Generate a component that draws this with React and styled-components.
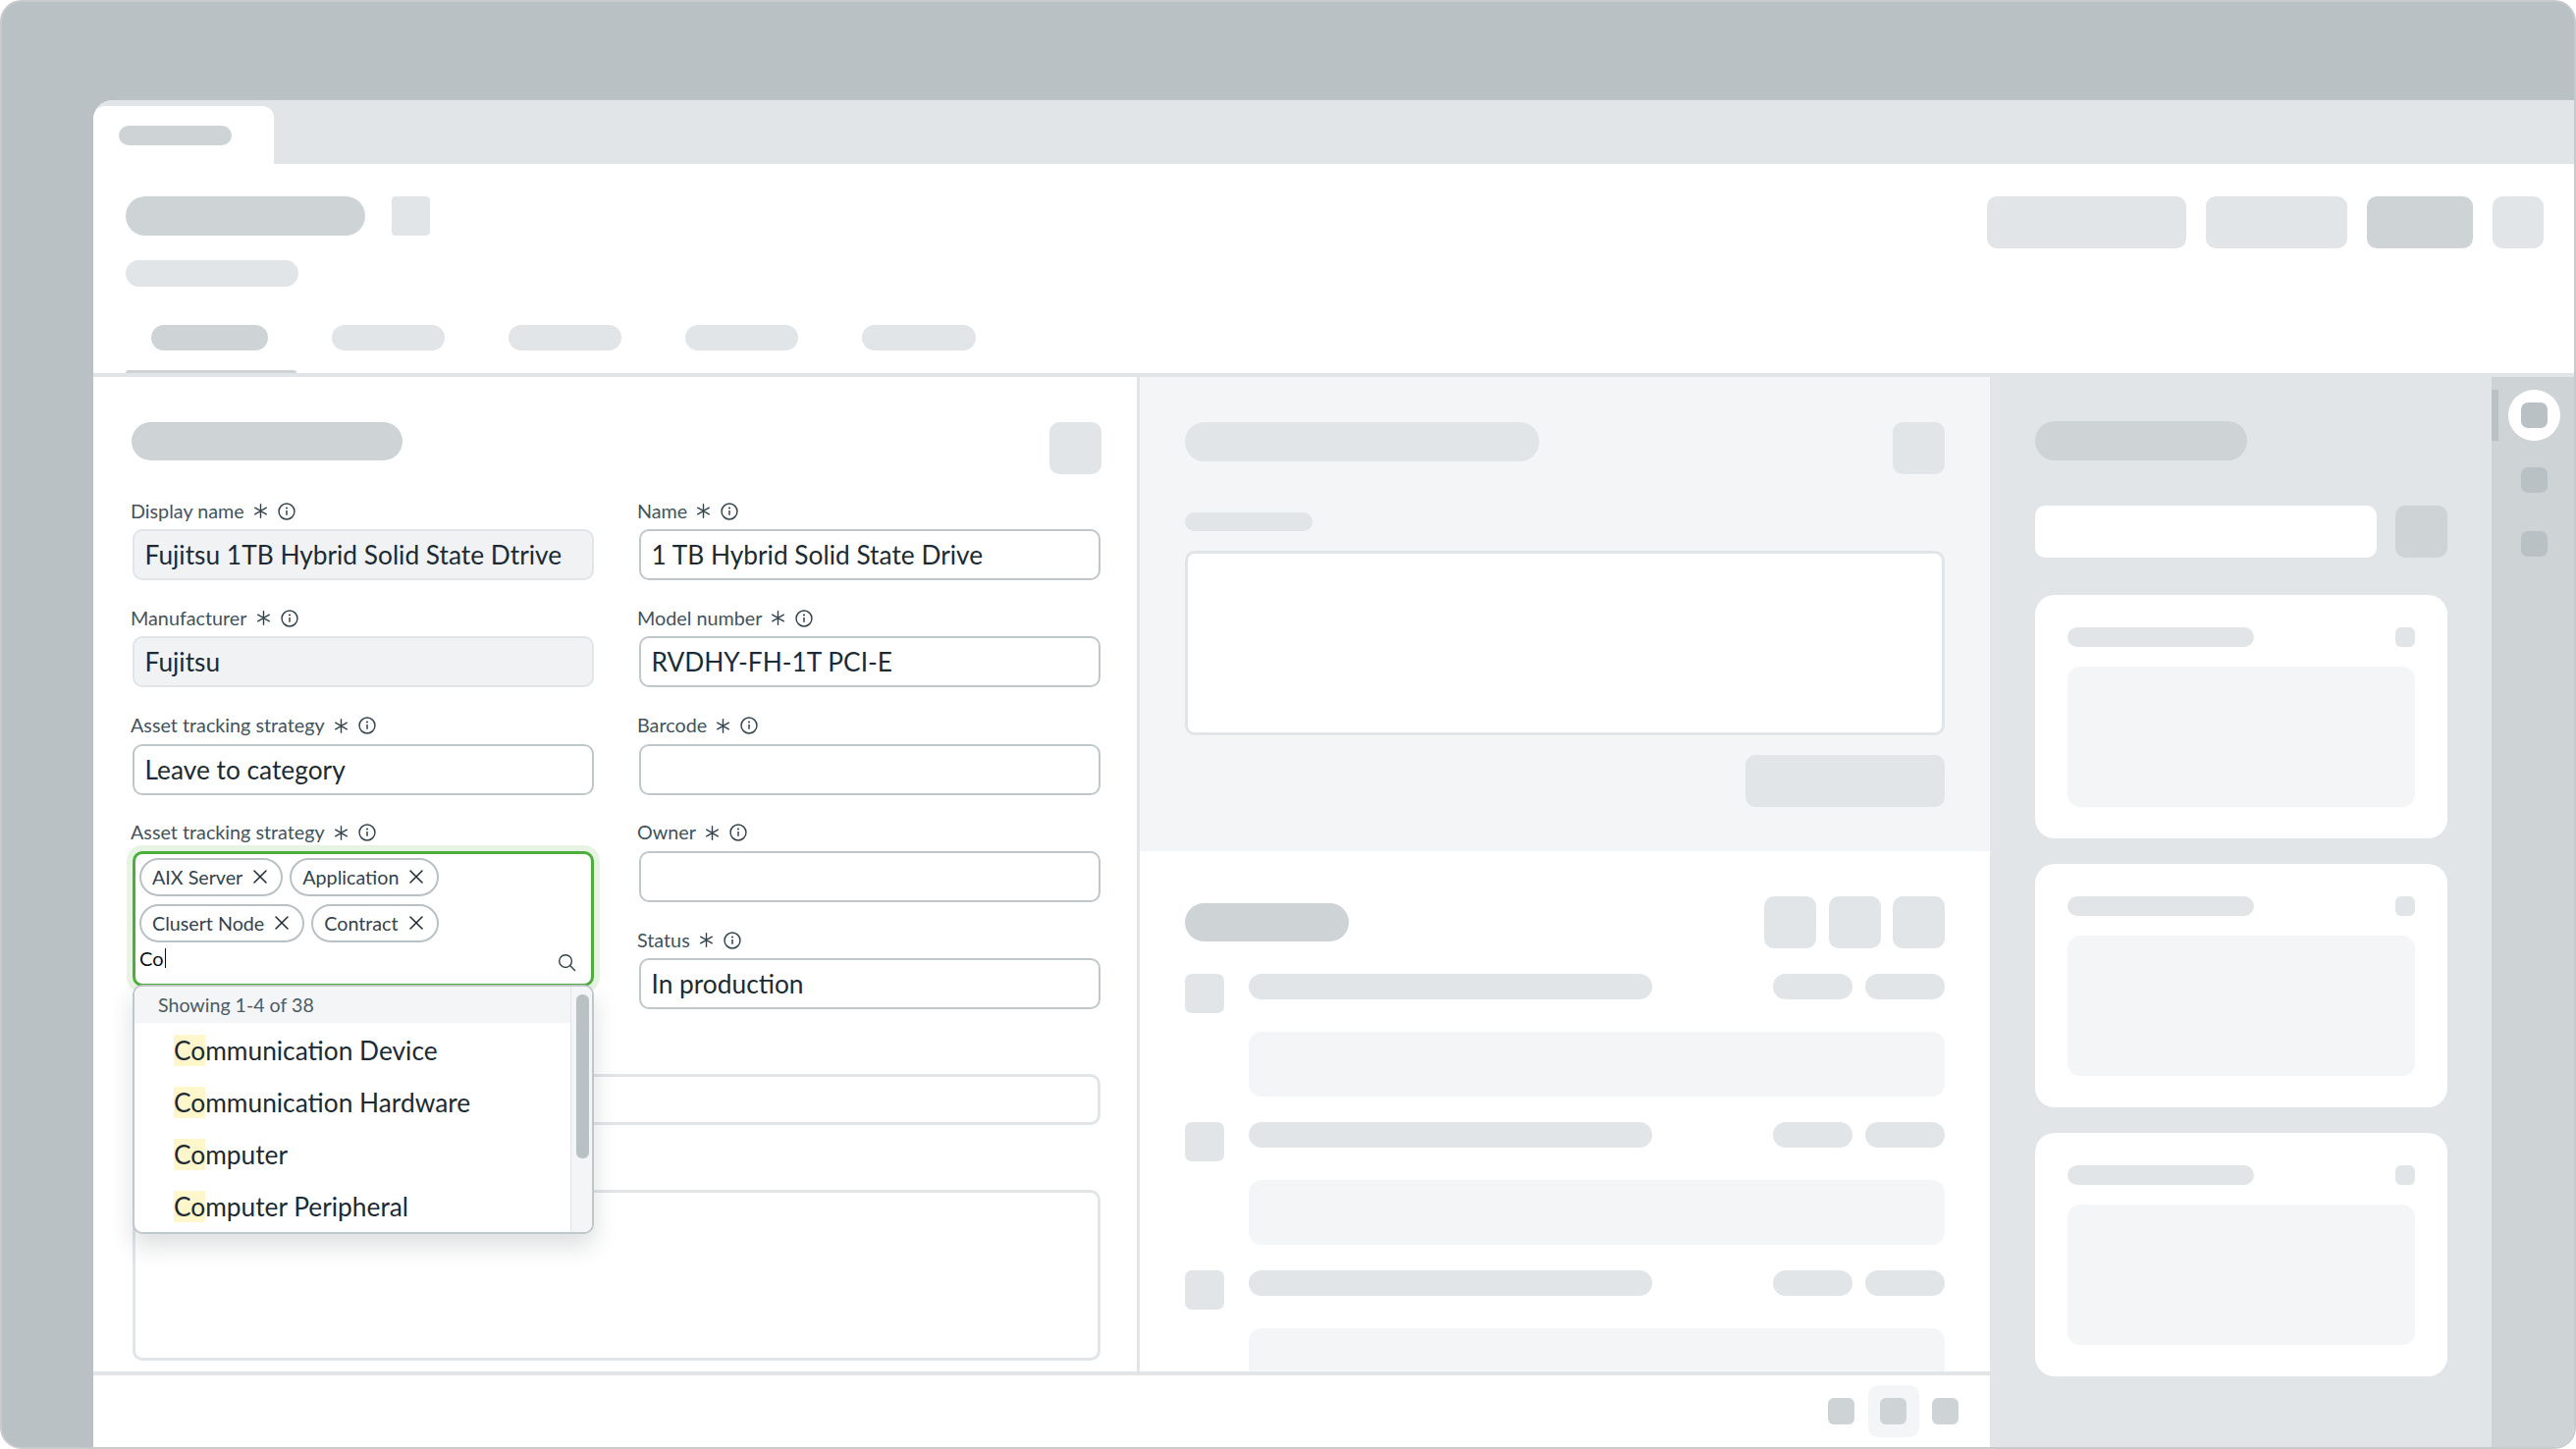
import styled, { createGlobalStyle } from "styled-components";

const DARK = "#b9c1c4";
const MID = "#ced3d6";
const LIGHT = "#e1e5e8";
const PALE = "#f4f5f7";
const INK = "#1c2b33";

const GlobalStyle = createGlobalStyle`
  html, body { margin: 0; padding: 0; background: #fff; }
  * { box-sizing: border-box; }
  body { font-family: "Lato", "Noto Sans", sans-serif; color: ${INK}; }
`;

const Frame = styled.div`
  width: 2624px;
  height: 1476px;
  display: flex;
  flex-direction: column;
  padding: 100px 0 0 93px;
  background: ${DARK};
  border: 2px solid #c8cacc;
  border-radius: 22px;
  overflow: hidden;
`;

const Win = styled.div`
  flex: 1;
  min-height: 0;
  display: flex;
  flex-direction: column;
  background: #fff;
  border-top-left-radius: 20px;
  overflow: hidden;
`;

const TabStrip = styled.div`
  height: 65px;
  flex-shrink: 0;
  display: flex;
  align-items: flex-end;
  background: ${LIGHT};
`;

const TabCard = styled.div`
  width: 184px;
  height: 59px;
  padding: 20px 0 0 26px;
  background: #fff;
  border-radius: 12px 12px 0 0;
`;

// grey placeholder shape, everything that is not real text in the mock
const Bone = styled.div`
  flex-shrink: 0;
  width: ${(p) => p.$w}px;
  height: ${(p) => p.$h}px;
  background: ${(p) => p.$tone || LIGHT};
  border-radius: ${(p) => (p.$r === undefined ? p.$h / 2 : p.$r)}px;
`;

const Header = styled.div`
  height: 217px;
  flex-shrink: 0;
  padding: 33px 31px 0 33px;
  border-bottom: 4px solid ${LIGHT};
`;

const HeaderTop = styled.div`
  display: flex;
  justify-content: space-between;
  align-items: flex-start;
`;

const TitleCol = styled.div`
  display: flex;
  flex-direction: column;
  gap: 25px;
`;

const TitleRow = styled.div`
  display: flex;
  gap: 27px;
`;

const Actions = styled.div`
  display: flex;
  gap: 20px;
`;

const Tabs = styled.div`
  display: flex;
  gap: 65px;
  margin-top: 39px;
  padding-left: 26px;
`;

const Tab = styled.div`
  position: relative;
  height: 49px;

  ${(p) =>
    p.$active &&
    `&::after {
      content: "";
      position: absolute;
      left: -26px;
      bottom: 0;
      width: 174px;
      height: 3px;
      background: ${MID};
      border-radius: 3px 3px 0 0;
    }`}
`;

const Body = styled.div`
  flex: 1;
  min-height: 0;
  display: flex;
`;

const Main = styled.div`
  width: 1932px;
  display: flex;
  flex-direction: column;
`;

const Columns = styled.div`
  flex: 1;
  min-height: 0;
  display: flex;
`;

const FormPanel = styled.div`
  width: 1066px;
  padding: 46px 37px 0 40px;
  border-right: 3px solid ${LIGHT};
`;

const PanelHead = styled.div`
  display: flex;
  justify-content: space-between;
  align-items: flex-start;
`;

const FormHead = styled(PanelHead)`
  margin: 0 -1px;
`;

const FormGrid = styled.div`
  display: grid;
  grid-template-columns: 470px 470px;
  column-gap: 46px;
  row-gap: 28.25px;
  margin-top: 27px;
`;

const Field = styled.div`
  min-width: 0;
  ${(p) => p.$span && `grid-row: span 2;`}
`;

const WideField = styled.div`
  grid-column: 1 / -1;
  padding-top: ${(p) => p.$top}px;
`;

const Label = styled.div`
  height: 29px;
  margin-left: -2px;
  padding-bottom: 8px;
  display: flex;
  align-items: center;
  font-size: 19.75px;
  line-height: 24px;
  color: #44535b;
`;

const Star = styled.svg`
  width: 15px;
  height: 15px;
  margin: 0 10px 0 9px;
  flex-shrink: 0;
`;

const InfoIcon = styled.svg`
  width: 18px;
  height: 18px;
  flex-shrink: 0;
`;

const Input = styled.div`
  height: ${(p) => p.$h || 52}px;
  padding: 0 10.5px;
  display: flex;
  align-items: center;
  font-size: 26.3px;
  color: ${INK};
  background: ${(p) => (p.$disabled ? "#f0f2f4" : "#fff")};
  border: ${(p) => (p.$soft ? 3 : 2)}px solid ${(p) => (p.$disabled || p.$soft ? LIGHT : "#c0c7ca")};
  border-radius: 10px;
`;

const Combo = styled.div`
  position: relative;
`;

const MultiBox = styled.div`
  height: 138px;
  padding: 4px 4px 0;
  background: #fff;
  border: 3px solid #4cae3b;
  border-radius: 10px;
  box-shadow: 0 0 0 6px #e7f3e3;
`;

const ChipList = styled.div`
  display: flex;
  flex-wrap: wrap;
  gap: 8px 7px;
`;

const Chip = styled.div`
  height: 39px;
  padding: 0 14px 0 11px;
  display: flex;
  align-items: center;
  gap: 11px;
  font-size: 19.7px;
  color: #33434b;
  border: 2px solid ${DARK};
  border-radius: 20px;
`;

const CloseIcon = styled.svg`
  width: 14px;
  height: 14px;
  flex-shrink: 0;
`;

const SearchRow = styled.div`
  display: flex;
  justify-content: space-between;
  align-items: flex-start;
  padding: 2px 11px 0 0;
`;

const Typed = styled.div`
  display: flex;
  align-items: center;
  font-size: 20px;
  line-height: 28px;
  color: #111;

  &::after {
    content: "";
    width: 1px;
    height: 20px;
    margin-left: 1px;
    background: #111;
  }
`;

const SearchIcon = styled.svg`
  width: 19px;
  height: 19px;
  margin-top: 9px;
`;

const Dropdown = styled.div`
  position: absolute;
  z-index: 5;
  top: calc(100% - 2px);
  left: 0;
  right: 0;
  height: 254px;
  display: flex;
  background: #fff;
  border: 2px solid #c0c7ca;
  border-radius: 10px;
  box-shadow: 0 12px 24px rgba(40, 50, 55, 0.16);
  overflow: hidden;
`;

const Options = styled.div`
  flex: 1;
  min-width: 0;
`;

const OptionHint = styled.div`
  height: 37px;
  padding-left: 24px;
  display: flex;
  align-items: center;
  font-size: 19.6px;
  color: #4d5b63;
  background: ${PALE};
`;

const Option = styled.div`
  height: 53px;
  padding: 12px 0 0 40px;
  font-size: 26.3px;
  line-height: 32px;
  color: ${INK};

  mark {
    background: #fff6cc;
    color: inherit;
  }
`;

const ScrollTrack = styled.div`
  width: 22px;
  padding: 8px 3px 0 5px;
  background: ${PALE};
  border-left: 1px solid ${LIGHT};
`;

const ScrollThumb = styled.div`
  height: 167px;
  background: ${DARK};
  border-radius: 6px;
`;

const NotesPanel = styled.div`
  width: 866px;
  display: flex;
  flex-direction: column;
`;

const NoteSection = styled.div`
  height: 483px;
  flex-shrink: 0;
  padding: 46px 46px 0;
  background: ${PALE};
`;

const NoteLabel = styled(Bone)`
  margin-top: 39px;
`;

const NoteBox = styled.div`
  height: 188px;
  margin: 20px 0;
  background: #fff;
  border: 3px solid ${LIGHT};
  border-radius: 10px;
`;

const Right = styled.div`
  display: flex;
  justify-content: flex-end;
`;

const ActivitySection = styled.div`
  flex: 1;
  min-height: 0;
  padding: 46px 46px 0;
  overflow: hidden;
`;

const ActivityHead = styled.div`
  display: flex;
  justify-content: space-between;
  align-items: center;
`;

const ButtonRow = styled.div`
  display: flex;
  gap: 12.5px;
`;

const Feed = styled.div`
  display: flex;
  flex-direction: column;
  gap: 26px;
  margin-top: 26px;
`;

const FeedItem = styled.div`
  display: grid;
  grid-template-columns: 40px 1fr;
  column-gap: 25px;
`;

const FeedTop = styled.div`
  display: flex;
  justify-content: space-between;
  margin-bottom: 33px;
`;

const FeedPills = styled.div`
  display: flex;
  gap: 13px;
`;

const FeedBlock = styled.div`
  height: 66px;
  background: ${PALE};
  border-radius: 13px;
`;

const Footer = styled.div`
  height: 77px;
  flex-shrink: 0;
  padding-right: 32px;
  display: flex;
  justify-content: flex-end;
  align-items: center;
  gap: 13.5px;
  border-top: 4px solid ${LIGHT};
`;

const PageButton = styled.div`
  width: 52px;
  height: 53px;
  display: flex;
  align-items: center;
  justify-content: center;
  background: ${PALE};
  border-radius: 10px;
`;

const SidePanel = styled.div`
  width: 511px;
  flex-shrink: 0;
  padding: 45px 45px 0 46px;
  background: ${LIGHT};
`;

const SideSearch = styled.div`
  display: flex;
  justify-content: space-between;
  margin: 46px 0 38px;
`;

const CardStack = styled.div`
  display: flex;
  flex-direction: column;
  gap: 26px;
`;

const Card = styled.div`
  height: 248px;
  padding: 33px;
  background: #fff;
  border-radius: 20px;
`;

const CardHead = styled.div`
  display: flex;
  justify-content: space-between;
  margin-bottom: 20px;
`;

const CardBlock = styled.div`
  height: 143px;
  background: ${PALE};
  border-radius: 13px;
`;

const Rail = styled.div`
  flex: 1;
  display: flex;
  flex-direction: column;
  gap: 13.5px;
  padding: 13px 0 0 17px;
  background: ${MID};
`;

const RailItem = styled.div`
  position: relative;
  width: 53px;
  height: 52px;
  display: flex;
  align-items: center;
  justify-content: center;
  border-radius: 50%;
  background: ${(p) => (p.$active ? "#fff" : "transparent")};

  ${(p) =>
    p.$active &&
    `&::before {
      content: "";
      position: absolute;
      left: -17px;
      top: 0;
      width: 7px;
      height: 52px;
      background: ${DARK};
    }`}
`;

const Required = () => (
  <Star viewBox="0 0 16 16" fill="none" stroke="#33434b" strokeWidth="1.5" strokeLinecap="round">
    <path d="M8 .8v14.4M1.8 4.4l12.4 7.2M14.2 4.4 1.8 11.6" />
  </Star>
);

const Info = () => (
  <InfoIcon viewBox="0 0 19 19" fill="none" stroke="#33434b">
    <circle cx="9.5" cy="9.5" r="8.4" strokeWidth="1.5" />
    <path d="M9.5 8.5v5" strokeWidth="1.6" />
    <circle cx="9.5" cy="5.8" r="1.1" fill="#33434b" stroke="none" />
  </InfoIcon>
);

const FieldLabel = ({ children }) => (
  <Label>
    {children}
    <Required />
    <Info />
  </Label>
);

const Tag = ({ children }) => (
  <Chip>
    {children}
    <CloseIcon viewBox="0 0 14 14" fill="none" stroke="#1c2b33" strokeWidth="1.5" strokeLinecap="round">
      <path d="M1 1l12 12M13 1 1 13" />
    </CloseIcon>
  </Chip>
);

const tags = ["AIX Server", "Application", "Clusert Node", "Contract"];
const options = ["mmunication Device", "mmunication Hardware", "mputer", "mputer Peripheral"];
const tabWidths = [119, 115, 115, 115, 116];

export default function App() {
  return (
    <>
      <GlobalStyle />
      <Frame>
        <Win>
          <TabStrip>
            <TabCard>
              <Bone $w={115} $h={20} $tone={MID} />
            </TabCard>
          </TabStrip>

          <Header>
            <HeaderTop>
              <TitleCol>
                <TitleRow>
                  <Bone $w={244} $h={40} $tone={MID} />
                  <Bone $w={39} $h={40} $r={4} />
                </TitleRow>
                <Bone $w={176} $h={27} />
              </TitleCol>
              <Actions>
                <Bone $w={203} $h={53} $r={10} />
                <Bone $w={144} $h={53} $r={10} />
                <Bone $w={108} $h={53} $r={10} $tone={MID} />
                <Bone $w={52} $h={53} $r={10} />
              </Actions>
            </HeaderTop>
            <Tabs>
              {tabWidths.map((w, i) => (
                <Tab key={i} $active={i === 0}>
                  <Bone $w={w} $h={26} $tone={i === 0 ? MID : LIGHT} />
                </Tab>
              ))}
            </Tabs>
          </Header>

          <Body>
            <Main>
              <Columns>
                <FormPanel>
                  <FormHead>
                    <Bone $w={276} $h={39} $tone={MID} />
                    <Bone $w={53} $h={53} $r={10} />
                  </FormHead>
                  <FormGrid>
                    <Field>
                      <FieldLabel>Display name</FieldLabel>
                      <Input $disabled>Fujitsu 1TB Hybrid Solid State Dtrive</Input>
                    </Field>
                    <Field>
                      <FieldLabel>Name</FieldLabel>
                      <Input>1 TB Hybrid Solid State Drive</Input>
                    </Field>
                    <Field>
                      <FieldLabel>Manufacturer</FieldLabel>
                      <Input $disabled>Fujitsu</Input>
                    </Field>
                    <Field>
                      <FieldLabel>Model number</FieldLabel>
                      <Input>RVDHY-FH-1T PCI-E</Input>
                    </Field>
                    <Field>
                      <FieldLabel>Asset tracking strategy</FieldLabel>
                      <Input>Leave to category</Input>
                    </Field>
                    <Field>
                      <FieldLabel>Barcode</FieldLabel>
                      <Input />
                    </Field>
                    <Field $span>
                      <FieldLabel>Asset tracking strategy</FieldLabel>
                      <Combo>
                        <MultiBox>
                          <ChipList>
                            {tags.map((t) => (
                              <Tag key={t}>{t}</Tag>
                            ))}
                          </ChipList>
                          <SearchRow>
                            <Typed>Co</Typed>
                            <SearchIcon viewBox="0 0 20 20" fill="none" stroke="#33434b" strokeWidth="1.5" strokeLinecap="round">
                              <circle cx="8.5" cy="8.5" r="6.7" />
                              <path d="M13.5 13.5l5 5" />
                            </SearchIcon>
                          </SearchRow>
                        </MultiBox>
                        <Dropdown>
                          <Options>
                            <OptionHint>Showing 1-4 of 38</OptionHint>
                            {options.map((o) => (
                              <Option key={o}>
                                <mark>Co</mark>
                                {o}
                              </Option>
                            ))}
                          </Options>
                          <ScrollTrack>
                            <ScrollThumb />
                          </ScrollTrack>
                        </Dropdown>
                      </Combo>
                    </Field>
                    <Field>
                      <FieldLabel>Owner</FieldLabel>
                      <Input />
                    </Field>
                    <Field>
                      <FieldLabel>Status</FieldLabel>
                      <Input>In production</Input>
                    </Field>
                    <WideField $top={38}>
                      <Input $soft />
                    </WideField>
                    <WideField $top={37.5}>
                      <Input $soft $h={173.5} />
                    </WideField>
                  </FormGrid>
                </FormPanel>

                <NotesPanel>
                  <NoteSection>
                    <PanelHead>
                      <Bone $w={361} $h={40} $tone={LIGHT} />
                      <Bone $w={53} $h={53} $r={10} />
                    </PanelHead>
                    <NoteLabel $w={130} $h={19} />
                    <NoteBox />
                    <Right>
                      <Bone $w={203} $h={53} $r={10} />
                    </Right>
                  </NoteSection>
                  <ActivitySection>
                    <ActivityHead>
                      <Bone $w={167} $h={39} $tone={MID} />
                      <ButtonRow>
                        <Bone $w={53} $h={53} $r={10} />
                        <Bone $w={53} $h={53} $r={10} />
                        <Bone $w={53} $h={53} $r={10} />
                      </ButtonRow>
                    </ActivityHead>
                    <Feed>
                      {[0, 1, 2].map((i) => (
                        <FeedItem key={i}>
                          <Bone $w={40} $h={40} $r={7} />
                          <div>
                            <FeedTop>
                              <Bone $w={411} $h={26} />
                              <FeedPills>
                                <Bone $w={81} $h={26} />
                                <Bone $w={81} $h={26} />
                              </FeedPills>
                            </FeedTop>
                            <FeedBlock />
                          </div>
                        </FeedItem>
                      ))}
                    </Feed>
                  </ActivitySection>
                </NotesPanel>
              </Columns>

              <Footer>
                <Bone $w={27} $h={27} $r={6} $tone={MID} />
                <PageButton>
                  <Bone $w={27} $h={27} $r={6} $tone={MID} />
                </PageButton>
                <Bone $w={27} $h={27} $r={6} $tone={MID} />
              </Footer>
            </Main>

            <SidePanel>
              <Bone $w={216} $h={40} $tone={MID} />
              <SideSearch>
                <Bone $w={348} $h={53} $r={10} $tone="#fff" />
                <Bone $w={53} $h={53} $r={10} $tone={MID} />
              </SideSearch>
              <CardStack>
                {[0, 1, 2].map((i) => (
                  <Card key={i}>
                    <CardHead>
                      <Bone $w={190} $h={20} />
                      <Bone $w={20} $h={20} $r={6} />
                    </CardHead>
                    <CardBlock />
                  </Card>
                ))}
              </CardStack>
            </SidePanel>

            <Rail>
              <RailItem $active>
                <Bone $w={27} $h={26} $r={7} $tone={DARK} />
              </RailItem>
              <RailItem>
                <Bone $w={27} $h={26} $r={7} $tone={DARK} />
              </RailItem>
              <RailItem>
                <Bone $w={27} $h={26} $r={7} $tone={DARK} />
              </RailItem>
            </Rail>
          </Body>
        </Win>
      </Frame>
    </>
  );
}
